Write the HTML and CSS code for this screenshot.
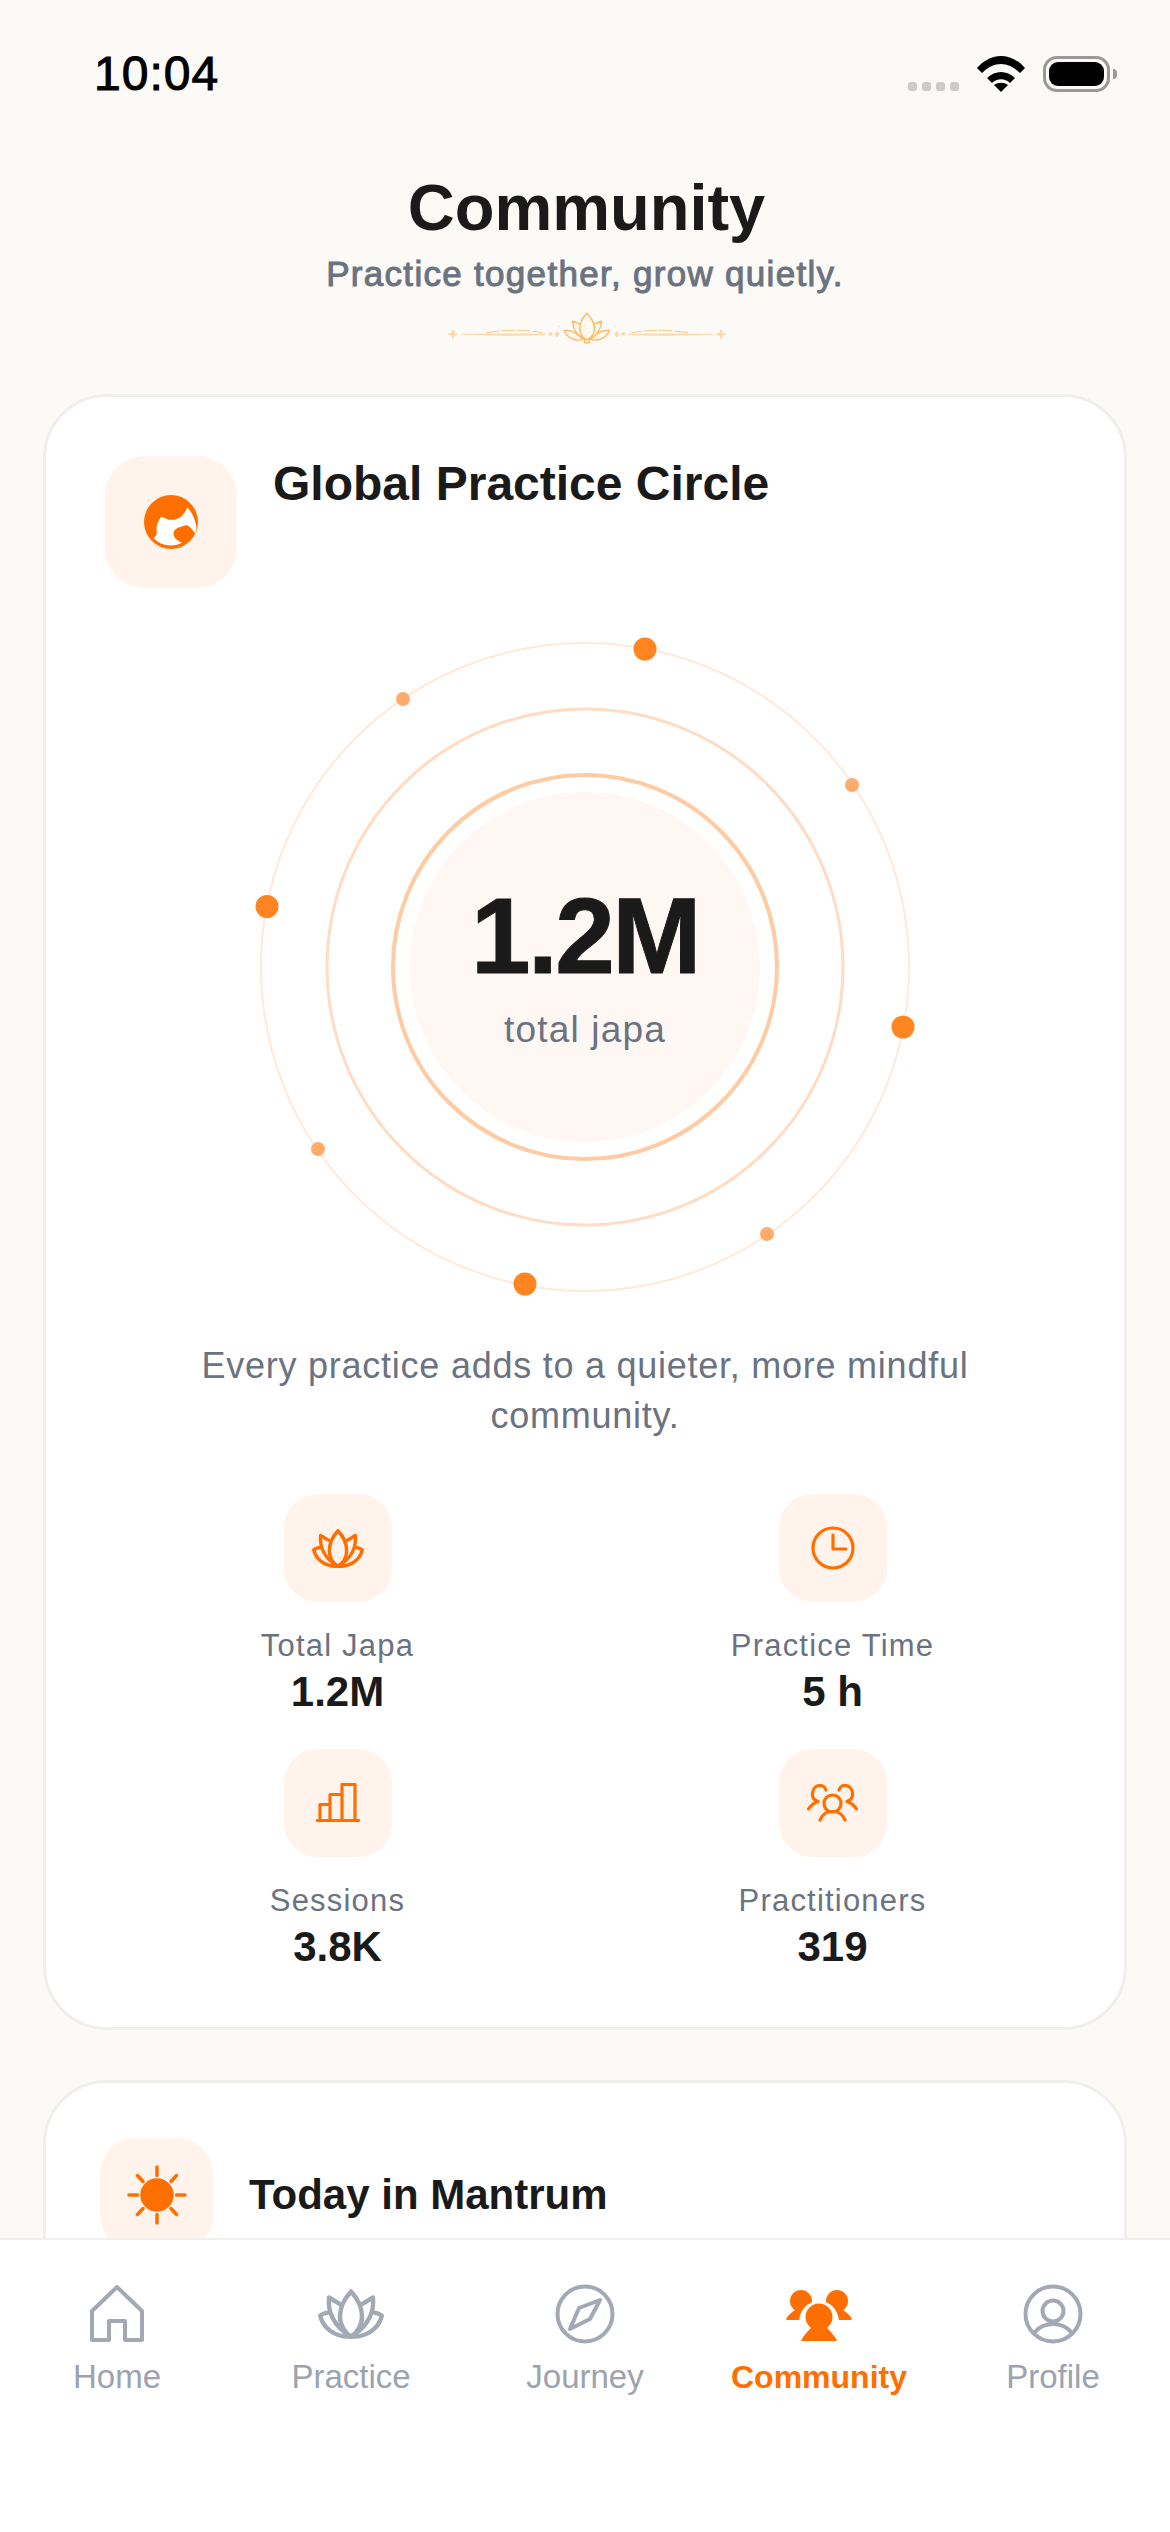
FILE: index.html
```html
<!DOCTYPE html>
<html lang="en">
<head>
  <meta charset="UTF-8">
  <meta name="viewport" content="width=device-width, initial-scale=1">
  <title>Community</title>
  <link rel="stylesheet" href="styles.css">
</head>
<body>
  <div class="screen">
    <main class="content">
      <div class="status">
        <span class="time">10:04</span>
        <div class="status-icons">
          <div class="signal"><i></i><i></i><i></i><i></i></div>
          <svg class="wifi" viewBox="0 0 48 37"><path d="M0 13C14-3 34-3 48 13l-5 5C31 6 17 6 5 18z"/><path d="M10 23c8-8 20-8 28 0l-5 5c-5-5-13-5-18 0z"/><path d="M17 30c4-3 10-3 14 0l-7 7z"/></svg>
          <div class="battery"><div class="battery-fill"></div></div>
          <div class="battery-nub"></div>
        </div>
      </div>

      <header class="page-head">
        <h1>Community</h1>
        <p>Practice together, grow quietly.</p>
        <svg class="flourish" viewBox="64 55 865 110">
          <defs>
            <g id="flourish-side">
              <path class="fl-solid" d="M100 113l5 12 12 5-12 5-5 12-5-12-12-5 12-5z"/>
              <path class="fl-solid" d="M125 129C200 128 300 128 380 129V132C300 137 200 134 125 132z"/>
              <path class="fl-dash" d="M200 126C250 116 320 116 370 126"/>
              <rect class="fl-solid" x="388" y="124" width="11" height="11" rx="3"/>
              <path class="fl-solid" d="M413 120l8 10-8 10-8-10z"/>
              <circle class="fl-solid" cx="418" cy="107" r="2"/>
            </g>
          </defs>
          <use href="#flourish-side"/>
          <use href="#flourish-side" transform="matrix(-1 0 0 1 1005 0)"/>
          <path class="fl-petal" d="M434 119C450 117 470 122 490 146C470 152 445 145 434 119zM570 119C554 117 534 122 514 146C534 152 559 145 570 119z"/>
          <path class="fl-petal" d="M459 91L482 99C478 115 486 135 497 146C475 135 460 115 459 91zM546 91L523 99C527 115 519 135 508 146C530 135 545 115 546 91z"/>
          <path class="fl-petal" d="M502 67C488 82 481 97 481 112C481 128 490 141 502 148C514 141 525 128 525 112C525 97 516 82 502 67z"/>
          <ellipse class="fl-petal" cx="502" cy="151" rx="8" ry="5"/>
        </svg>
      </header>

      <section class="card">
        <div class="card-head">
          <div class="icon-box large">
            <svg class="globe" viewBox="163 168 160 160">
              <circle class="orange-fill" cx="243" cy="248" r="80"/>
              <path class="white-fill" d="M215 232L235 241C250 243 265 240 275 230C282 223 288 214 291 204C300 214 315 235 318 262C318 270 317 276 314 282C308 272 300 262 289 257C280 260 270 262 262 266C252 272 248 280 252 290C256 300 265 304 276 309C262 318 240 320 222 315C210 311 200 304 192 296C199 290 203 282 200 270C199 258 206 243 215 232z"/>
            </svg>
          </div>
          <h2>Global Practice Circle</h2>
        </div>

        <div class="orbit">
          <svg class="orbit-rings" viewBox="0 0 670 670">
            <circle class="ring-outer" cx="335" cy="335" r="324"/>
            <circle class="ring-mid" cx="335" cy="335" r="258"/>
            <circle class="ring-inner" cx="335" cy="335" r="192"/>
            <circle class="ring-core" cx="335" cy="335" r="175"/>
            <circle class="dot-big" cx="395" cy="17" r="11.5"/>
            <circle class="dot-big" cx="17" cy="274.500" r="11.5"/>
            <circle class="dot-big" cx="653" cy="395" r="11.5"/>
            <circle class="dot-big" cx="275" cy="652" r="11.5"/>
            <circle class="dot-small" cx="153" cy="67" r="7"/>
            <circle class="dot-small" cx="602" cy="153" r="7"/>
            <circle class="dot-small" cx="68" cy="517" r="7"/>
            <circle class="dot-small" cx="517" cy="602" r="7"/>
          </svg>
          <div class="orbit-center">
            <div class="orbit-num">1.2M</div>
            <div class="orbit-label">total japa</div>
          </div>
        </div>

        <p class="caption">Every practice adds to a quieter, more mindful community.</p>

        <div class="stats">
          <div class="stat">
            <div class="icon-box small">
              <svg class="stat-lotus line-icon" viewBox="0 0 24 18"><use href="#lotus"/></svg>
            </div>
            <div class="stat-label">Total Japa</div>
            <div class="stat-value">1.2M</div>
          </div>
          <div class="stat">
            <div class="icon-box small">
              <svg class="stat-clock line-icon" viewBox="0 0 44 44"><circle cx="22" cy="22" r="20"/><path d="M22 9V23H35"/></svg>
            </div>
            <div class="stat-label">Practice Time</div>
            <div class="stat-value">5 h</div>
          </div>
          <div class="stat">
            <div class="icon-box small">
              <svg class="stat-bars line-icon" viewBox="0 0 44 40"><path d="M1.500 37.500H42.500M4 37.500V21.500H14V37.500M14 37.500V11.500H26V37.500M26 37.500V1.500H39V37.500"/></svg>
            </div>
            <div class="stat-label">Sessions</div>
            <div class="stat-value">3.8K</div>
          </div>
          <div class="stat">
            <div class="icon-box small">
              <svg class="stat-people line-icon" viewBox="0 0 51 38"><circle cx="25.500" cy="19.500" r="8.500"/><path d="M13 36C16 29 20 27.500 25.500 27.500S35 29 38 36"/><path d="M1.500 25C4 21 7 19 11 17.500C7 16 5 13 5.500 9C6 4.500 9 1.500 13 1.500C16 1.500 18 3.500 19 6"/><path d="M49.500 25C47 21 44 19 40 17.500C44 16 46 13 45.500 9C45 4.500 42 1.500 38 1.500C35 1.500 33 3.500 32 6"/></svg>
            </div>
            <div class="stat-label">Practitioners</div>
            <div class="stat-value">319</div>
          </div>
        </div>
      </section>

      <section class="card card-today">
        <div class="card-head center">
          <div class="icon-box medium">
            <svg class="sun" viewBox="0 0 60 60">
              <circle class="orange-fill" cx="30" cy="30" r="15"/>
              <path d="M30 2V10.500M30 49.500V58M2 30H10.500M49.500 30H58M10.500 10.500L16 16.500M44 43.500L49.500 49.500M49.500 10.500L44 16.500M16 43.500L10.500 49.500"/>
            </svg>
          </div>
          <h2 class="today-title">Today in Mantrum</h2>
        </div>
      </section>
    </main>

    <nav class="tabbar">
      <div class="tab">
        <svg class="nav-icon" viewBox="0 0 60 60"><path d="M5 27L30 3L55 27V56H38V37H22V56H5z"/></svg>
        <span>Home</span>
      </div>
      <div class="tab">
        <svg class="nav-icon nav-lotus" viewBox="0 0 24 18"><use href="#lotus"/></svg>
        <span>Practice</span>
      </div>
      <div class="tab">
        <svg class="nav-icon" viewBox="0 0 60 60"><circle cx="30" cy="30" r="27.500"/><path d="M45 16L35 35L15 45L24 24z"/></svg>
        <span>Journey</span>
      </div>
      <div class="tab active">
        <svg class="nav-community" viewBox="0 0 68 54">
          <circle cx="16" cy="12" r="11"/>
          <path d="M1 30C3 26 7 23 10 21H22V31H2z"/>
          <circle cx="52" cy="12" r="11"/>
          <path d="M67 30C65 26 61 23 58 21H46V31H66z"/>
          <path class="white-fill" d="M14 34C14 22 22 12 34 12S54 22 54 34z"/>
          <circle cx="34" cy="28" r="13.500"/>
          <path d="M16 52C18 47 23 42 27 38H41C45 42 50 47 52 52z"/>
        </svg>
        <span>Community</span>
      </div>
      <div class="tab">
        <svg class="nav-icon" viewBox="0 0 60 60"><circle cx="30" cy="30" r="27.500"/><circle cx="30" cy="27" r="10.500"/><path d="M12 48C17 42 23 40 30 40S43 42 48 48"/></svg>
        <span>Profile</span>
      </div>
    </nav>
  </div>

  <svg class="sprites">
    <defs>
      <g id="lotus">
        <path d="M12 .8C9.500 3.500 8 6.800 8 10C8 13 9.800 15.800 12 17.200C14.200 15.800 16 13 16 10C16 6.800 14.500 3.500 12 .8z"/>
        <path d="M8.300 5.600L4 3C3.500 8 5.500 13.500 12 17.200"/>
        <path d="M15.700 5.600L20 3C20.500 8 18.500 13.500 12 17.200"/>
        <path d="M3.800 8.500C2.800 8.500 1.800 8.800 .8 9.600C1.800 14 6 17.500 12 17.200C18 17.500 22.200 14 23.200 9.600C22.200 8.800 21.200 8.500 20.200 8.500"/>
      </g>
    </defs>
  </svg>
</body>
</html>
```

FILE: styles.css
```css
* {
  box-sizing: border-box;
}
body {
  margin: 0;
  font-family: "Liberation Sans", Arial, sans-serif;
  color: #1a1a1a;
}
h1, h2, p {
  margin: 0;
}
.sprites {
  position: absolute;
  width: 0;
  height: 0;
}
.screen {
  width: 1170px;
  height: 2532px;
  display: flex;
  flex-direction: column;
  overflow: hidden;
  background-color: #fbfaf6;
}
.content {
  flex: 1;
  min-height: 0;
  overflow: hidden;
  padding: 0 43px;
}

/* status bar */
.status {
  height: 170px;
  margin: 0 -43px;
  padding: 0 53px 0 94px;
  display: flex;
  justify-content: space-between;
}
.time {
  margin-top: 47px;
  font-size: 48px;
  line-height: 54px;
  letter-spacing: 1px;
  font-weight: 400;
  color: #000;
  -webkit-text-stroke: 1px #000;
}
.status-icons {
  margin-top: 55px;
  display: flex;
  align-items: flex-start;
}
.signal {
  display: flex;
  gap: 5px;
  margin-top: 27px;
  margin-right: 18px;
}
.signal i {
  width: 9px;
  height: 9px;
  border-radius: 3px;
  background-color: #cccccc;
}
.wifi {
  width: 48px;
  height: 37px;
  margin-right: 18px;
}
.battery {
  width: 67px;
  height: 36px;
  padding: 3px;
  border: 3px solid #999;
  border-radius: 14px;
  margin-top: 1px;
}
.battery-fill {
  height: 100%;
  background-color: #000;
  border-radius: 9px;
}
.battery-nub {
  width: 4px;
  height: 10px;
  margin-top: 14px;
  margin-left: 3px;
  background-color: #999;
  border-radius: 0 5px 5px 0;
}

/* page header */
.page-head {
  text-align: center;
}
.page-head h1 {
  font-size: 65px;
  line-height: 76px;
  padding-left: 3px;
  font-weight: 700;
}
.page-head p {
  font-size: 35px;
  line-height: 40px;
  margin-top: 8px;
  font-weight: 400;
  letter-spacing: 1.3px;
  color: #6b7280;
  -webkit-text-stroke: 1px #6b7280;
}
.flourish {
  display: block;
  width: 288px;
  height: 37px;
  margin: 15px auto 0;
}
.fl-solid {
  fill: #ffd9a8;
}
.fl-dash {
  fill: none;
  stroke: #ffc680;
  stroke-width: 3;
  stroke-dasharray: 40 6;
}
.fl-petal {
  fill: #fff8ec;
  stroke: #ffb760;
  stroke-width: 4;
  stroke-linejoin: round;
}

/* cards */
.card {
  margin-top: 48px;
  width: 1084px;
  height: 1636px;
  padding: 59px 59px 53px;
  background-color: #fff;
  border: 3px solid #f0efeb;
  border-radius: 64px;
}
.card-today {
  margin-top: 50px;
  height: 400px;
  padding: 55px 54px;
}
.card-head {
  display: flex;
  align-items: flex-start;
  gap: 36px;
}
.card-head.center {
  align-items: center;
}
.card-head h2 {
  font-size: 48px;
  line-height: 56px;
  font-weight: 700;
}
.card-head .today-title {
  font-size: 42px;
}
.icon-box {
  display: flex;
  align-items: center;
  justify-content: center;
  flex-shrink: 0;
  background-color: #fff3ec;
}
.icon-box.large {
  width: 132px;
  height: 132px;
  border-radius: 40px;
}
.icon-box.medium {
  width: 113px;
  height: 113px;
  border-radius: 36px;
}
.icon-box.small {
  width: 108px;
  height: 108px;
  border-radius: 34px;
}
.globe {
  width: 54px;
  height: 54px;
}
.orange-fill {
  fill: #ff6f00;
}
.white-fill {
  fill: #fff;
}

/* orbit */
.orbit {
  position: relative;
  width: 670px;
  height: 670px;
  margin: 44px auto 0;
}
.orbit-rings {
  display: block;
  width: 670px;
  height: 670px;
  fill: none;
}
.ring-outer {
  stroke: #ffe9da;
  stroke-width: 2;
}
.ring-mid {
  stroke: #ffdcc2;
  stroke-width: 3;
}
.ring-inner {
  stroke: #ffcba3;
  stroke-width: 4;
}
.ring-core {
  fill: #fff7f3;
}
.dot-big {
  fill: #ff8522;
}
.dot-small {
  fill: #ffab6c;
}
.orbit-center {
  position: absolute;
  inset: 0;
  display: flex;
  flex-direction: column;
  align-items: center;
  justify-content: center;
}
.orbit-num {
  font-size: 107px;
  line-height: 120px;
  margin-top: -6px;
  font-weight: 700;
  letter-spacing: -2.500px;
  -webkit-text-stroke: 1px #1a1a1a;
}
.orbit-label {
  font-size: 37px;
  line-height: 44px;
  margin-top: 12px;
  letter-spacing: 1.2px;
  color: #6b7280;
}
.caption {
  width: 800px;
  margin: 39px auto 0;
  text-align: center;
  font-size: 36px;
  line-height: 50px;
  letter-spacing: 0.75px;
  color: #6b7280;
}

/* stats */
.stats {
  display: grid;
  grid-template-columns: 495px 495px;
  row-gap: 33px;
  margin: 53px -15px 0;
}
.stat {
  display: flex;
  flex-direction: column;
  align-items: center;
}
.stat svg {
  display: block;
}
.line-icon {
  fill: none;
  stroke: #ff6f00;
  stroke-width: 3.200;
  stroke-linecap: round;
  stroke-linejoin: round;
}
.stat-lotus {
  width: 52px;
  height: 39px;
  stroke-width: 1.600;
}
.stat-clock {
  width: 44px;
  height: 44px;
}
.stat-bars {
  width: 44px;
  height: 40px;
}
.stat-people {
  width: 51px;
  height: 38px;
}
.stat-label {
  margin-top: 24px;
  font-size: 31px;
  line-height: 40px;
  letter-spacing: 1.2px;
  color: #6b7280;
}
.stat-value {
  margin-top: 2px;
  font-size: 42px;
  line-height: 48px;
  font-weight: 700;
}
.sun {
  width: 60px;
  height: 60px;
  fill: none;
  stroke: #ff6f00;
  stroke-width: 3.500;
  stroke-linecap: round;
}

/* tab bar */
.tabbar {
  height: 294px;
  flex-shrink: 0;
  display: flex;
  padding-top: 44px;
  position: relative;
  background-color: #fff;
  border-top: 2px solid #f0efeb;
}
.tab {
  flex: 1;
  display: flex;
  flex-direction: column;
  align-items: center;
  font-size: 33px;
  line-height: 40px;
  color: #9ca3af;
}
.tab svg {
  display: block;
  height: 60px;
  margin-bottom: 13px;
}
.nav-icon {
  width: 60px;
  fill: none;
  stroke: #a2a9b5;
  stroke-width: 4;
  stroke-linejoin: round;
  stroke-linecap: round;
}
.nav-lotus {
  width: 66px;
  stroke-width: 1.600;
}
.nav-community {
  width: 68px;
  padding-top: 4px;
  fill: #ff6f00;
}
.tab.active {
  color: #ff6f00;
  font-size: 32px;
  font-weight: 700;
}
```
